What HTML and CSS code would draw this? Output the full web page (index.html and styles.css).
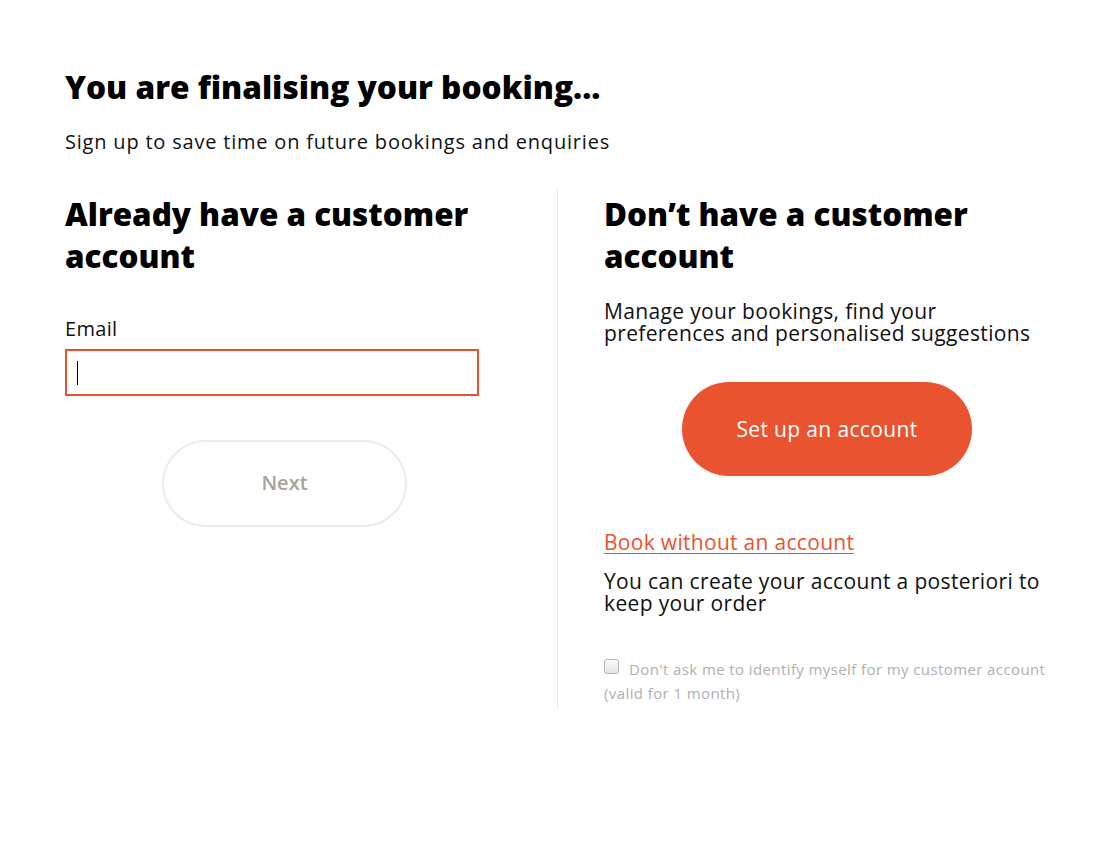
FILE: index.html
```html
<!DOCTYPE html>
<html lang="en">
<head>
<meta charset="utf-8">
<title>Finalising booking</title>
<link rel="stylesheet" href="styles.css">
</head>
<body>
<main class="page">
  <h1 class="title">You are finalising your booking...</h1>
  <p class="subtitle">Sign up to save time on future bookings and enquiries</p>
  <div class="columns">
    <section class="col col-left">
      <h2 class="col-title">Already have a customer account</h2>
      <label class="field-label" for="email">Email</label>
      <div class="input"><span class="caret"></span></div>
      <div class="btn-row">
        <button class="btn btn-ghost" type="button">Next</button>
      </div>
    </section>
    <section class="col col-right">
      <h2 class="col-title">Don’t have a customer account</h2>
      <p class="text text-intro">Manage your bookings, find your preferences and personalised suggestions</p>
      <div class="btn-row btn-row-right">
        <button class="btn btn-primary" type="button">Set up an account</button>
      </div>
      <a class="link" href="#">Book without an account</a>
      <p class="text text-after">You can create your account a posteriori to keep your order</p>
      <label class="check">
        <span class="box"></span>Don't ask me to identify myself for my customer account (valid for 1 month)
      </label>
    </section>
  </div>
</main>
</body>
</html>
```
FILE: styles.css
```css
* { box-sizing: border-box; }
html, body { margin: 0; padding: 0; background: #fff; }
body {
  font-family: "Open Sans", "Lato", sans-serif;
  color: #111;
}
.page {
  padding: 66px 0 0 65px;
  width: 1050px;
}
.title {
  font-family: "Open Sans", sans-serif;
  font-weight: 800;
  font-size: 31.6px;
  line-height: 42px;
  margin: 0;
  color: #000;
}
.subtitle {
  margin: 20px 0 0;
  font-size: 20px;
  line-height: 28px;
  font-weight: 400;
  letter-spacing: 0.8px;
}
.columns {
  display: grid;
  grid-template-columns: 493px 1fr;
  margin-top: 32px;
}
.col { padding-top: 5px; padding-bottom: 4px; }
.col-left { padding-right: 53px; border-right: 1px solid #ececec; }
.col-right { padding-left: 46px; }
.col-title {
  font-family: "Open Sans", sans-serif;
  font-weight: 800;
  font-size: 31.4px;
  line-height: 42px;
  margin: 0;
  color: #000;
}
.field-label {
  display: block;
  margin-top: 39px;
  font-size: 20px;
  line-height: 26px;
  letter-spacing: 0.3px;
}
.input {
  margin-top: 7px;
  width: 414px;
  height: 47px;
  border: 2px solid #e8522f;
  display: flex;
  align-items: center;
  padding-left: 10px;
}
.caret { width: 1px; height: 24px; background: #000; }
.btn-row { display: flex; justify-content: center; margin-top: 44px; }
.btn {
  font-family: "Open Sans", sans-serif;
  cursor: pointer;
}
.btn-ghost {
  width: 245px;
  height: 87px;
  border-radius: 44px;
  border: 2px solid #ebebeb;
  background: #fff;
  color: #a8a49b;
  font-size: 20px;
  font-weight: 600;
  padding-bottom: 4px;
}
.text {
  margin: 0;
  font-size: 21px;
  line-height: 22px;
  letter-spacing: 0.35px;
}
.text-intro { margin-top: 23px; }
.btn-row-right { margin-top: 38px; }
.btn-primary {
  width: 290px;
  height: 94px;
  border-radius: 47px;
  border: none;
  background: #e9532f;
  color: #fff;
  font-size: 21px;
  font-weight: 400;
  letter-spacing: 0.35px;
}
.link {
  display: inline-block;
  margin-top: 52px;
  color: #e9532f;
  font-size: 21px;
  line-height: 28px;
  letter-spacing: 0.3px;
  text-decoration: underline;
  text-underline-offset: 3px;
  text-decoration-thickness: 1px;
}
.text-after { margin-top: 14px; }
.check {
  display: block;
  margin-top: 43px;
  color: #b0b0b0;
  font-size: 15px;
  line-height: 24px;
  letter-spacing: 0.4px;
}
.box {
  display: inline-block;
  width: 15px;
  height: 15px;
  border: 1px solid #b5b5b5;
  border-radius: 3px;
  background: linear-gradient(#fafafa, #e6e6e6);
  margin-right: 10px;
  vertical-align: 1px;
}
```
